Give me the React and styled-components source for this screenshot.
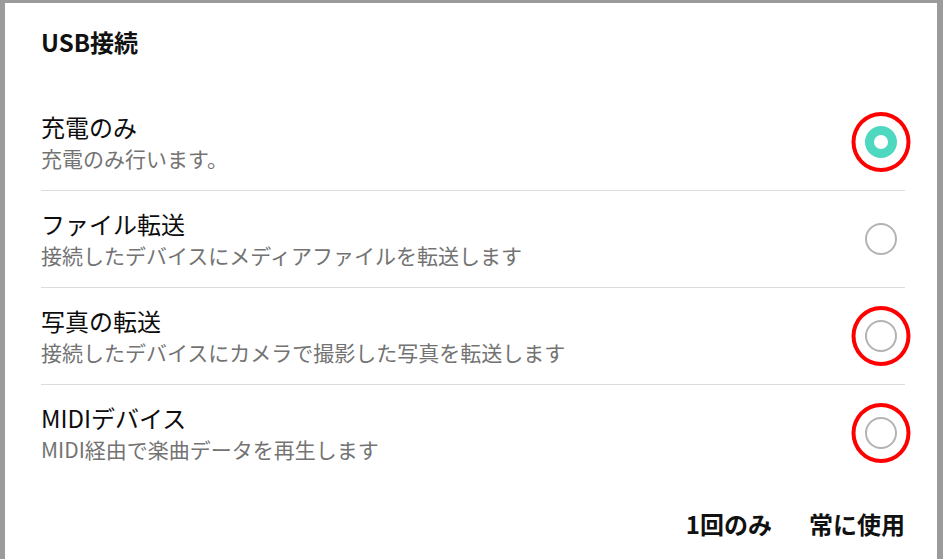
import React from "react";
import styled, { createGlobalStyle } from "styled-components";

const Global = createGlobalStyle`
  html, body { margin: 0; padding: 0; }
  body {
    background: #9b9b9b;
    font-family: "Noto Sans CJK JP", "Noto Sans", sans-serif;
    -webkit-font-smoothing: antialiased;
  }
`;

const Screen = styled.div`
  width: 943px;
  height: 559px;
  box-sizing: border-box;
  padding: 3px 6px 0 5px;
  overflow: hidden;
`;

const Dialog = styled.div`
  background: #ffffff;
  height: 100%;
  box-sizing: border-box;
  padding: 0 32px 0 36px;
  display: flex;
  flex-direction: column;
`;

const Title = styled.h1`
  margin: 0;
  padding: 23px 0 36px;
  font-size: 24px;
  line-height: 32px;
  font-weight: 700;
  color: #111;
`;

const List = styled.div`
  display: flex;
  flex-direction: column;
`;

const Row = styled.div`
  display: flex;
  align-items: center;
  box-sizing: border-box;
  padding-bottom: 1px;
  border-bottom: ${(p) => (p.$last ? "none" : "1px solid #dcdcdc")};
  height: ${(p) => (p.$last ? "96px" : "97px")};
`;

const Texts = styled.div`
  flex: 1;
  display: flex;
  flex-direction: column;
`;

const Primary = styled.div`
  font-size: 24px;
  line-height: 32px;
  color: #0d0d0d;
`;

const Secondary = styled.div`
  font-size: 21px;
  line-height: 30px;
  color: #737373;
`;

const RadioWrap = styled.div`
  position: relative;
  width: 32px;
  height: 32px;
  margin-right: 8px;
  flex-shrink: 0;
`;

const Radio = styled.div`
  width: 32px;
  height: 32px;
  box-sizing: border-box;
  border-radius: 50%;
  border: ${(p) => (p.$checked ? "9.5px solid #4dd8bf" : "2.5px solid #b3b3b3")};
  background: #fff;
`;

const Highlight = styled.div`
  position: absolute;
  left: 50%;
  top: 50%;
  width: 59px;
  height: 60px;
  transform: translate(-50%, -50%);
  box-sizing: border-box;
  border: 4.5px solid #ff0000;
  border-radius: 50%;
  pointer-events: none;
`;

const Footer = styled.div`
  display: flex;
  justify-content: flex-end;
  gap: 37px;
  padding-top: 27px;
`;

const Button = styled.button`
  border: none;
  background: none;
  padding: 0;
  font-family: inherit;
  font-size: 24px;
  line-height: 32px;
  font-weight: 700;
  color: #111;
`;

const items = [
  { title: "充電のみ", sub: "充電のみ行います。", checked: true, mark: true },
  { title: "ファイル転送", sub: "接続したデバイスにメディアファイルを転送します", checked: false, mark: false },
  { title: "写真の転送", sub: "接続したデバイスにカメラで撮影した写真を転送します", checked: false, mark: true },
  { title: "MIDIデバイス", sub: "MIDI経由で楽曲データを再生します", checked: false, mark: true },
];

export default function App() {
  return (
    <>
      <Global />
      <Screen>
        <Dialog>
          <Title>USB接続</Title>
          <List>
            {items.map((it, i) => (
              <Row key={it.title} $last={i === items.length - 1}>
                <Texts>
                  <Primary>{it.title}</Primary>
                  <Secondary>{it.sub}</Secondary>
                </Texts>
                <RadioWrap>
                  <Radio $checked={it.checked} />
                  {it.mark && <Highlight />}
                </RadioWrap>
              </Row>
            ))}
          </List>
          <Footer>
            <Button>1回のみ</Button>
            <Button>常に使用</Button>
          </Footer>
        </Dialog>
      </Screen>
    </>
  );
}
